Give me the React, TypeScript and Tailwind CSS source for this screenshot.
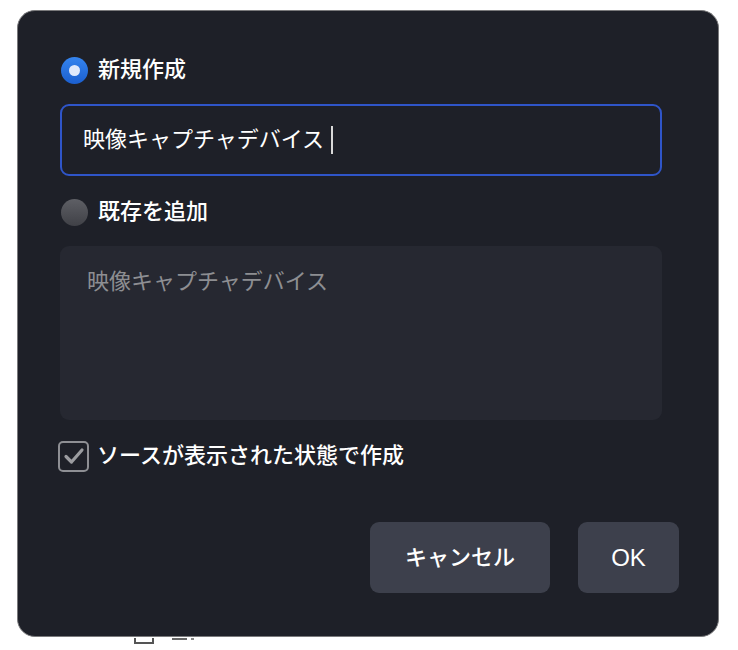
import React, { useState } from "react";

const font = "font-['Liberation_Sans','Noto_Sans_CJK_JP',sans-serif]";

const Radio: React.FC<{ checked: boolean }> = ({ checked }) =>
  checked ? (
    <div className="w-[27px] h-[27px] rounded-full bg-gradient-to-b from-[#3584ee] to-[#1b5fcf] flex items-center justify-center">
      <div className="w-[11px] h-[11px] rounded-full bg-[#dfe9fb]" />
    </div>
  ) : (
    <div className="w-[27px] h-[27px] rounded-full bg-gradient-to-b from-[#5e5f65] to-[#404147]" />
  );

const App: React.FC = () => {
  const [mode, setMode] = useState<"new" | "existing">("new");
  const [visible, setVisible] = useState<boolean>(true);

  return (
    <div className={`min-h-[650px] bg-white overflow-hidden ${font}`}>
      <div className="ml-[17px] mt-[10px] w-[702px] h-[627px] rounded-[18px] border border-[#7a7a7c] bg-[#1e2028] pl-[42px] pr-[39px] pt-[45px] flex flex-col">
        {/* new */}
        <div
          className="h-[28px] flex items-center gap-[10px] cursor-pointer"
          onClick={() => setMode("new")}
        >
          <div className="ml-[1px]">
            <Radio checked={mode === "new"} />
          </div>
          <span className="text-[22px] text-white font-medium leading-none">新規作成</span>
        </div>

        <div className="mt-[20px] w-[602px] h-[72px] rounded-[9px] border-2 border-[#2f55c9] flex items-center pl-[21px]">
          <span className="text-[22px] text-white leading-none">映像キャプチャデバイス</span>
          <span className="ml-[7px] w-[2px] h-[28px] bg-[#d9d9d9]" />
        </div>

        {/* existing */}
        <div
          className="mt-[22px] h-[28px] flex items-center gap-[10px] cursor-pointer"
          onClick={() => setMode("existing")}
        >
          <div className="ml-[1px]">
            <Radio checked={mode === "existing"} />
          </div>
          <span className="text-[22px] text-white font-medium leading-none">既存を追加</span>
        </div>

        <div className="mt-[20px] w-[602px] h-[174px] rounded-[9px] bg-[#262831] pl-[27px] pt-[25px]">
          <span className="text-[22px] text-[#8d8e92] leading-none">映像キャプチャデバイス</span>
        </div>

        {/* visible */}
        <div
          className="mt-[20px] h-[32px] flex items-center gap-[8px] cursor-pointer"
          onClick={() => setVisible(!visible)}
        >
          <div className="-ml-[2px] w-[31px] h-[31px] rounded-[5px] border-2 border-[#8e8f94] flex items-center justify-center">
            {visible && (
              <svg width="22" height="22" viewBox="0 0 22 22">
                <path
                  d="M3 11.5 L8.5 17 L19 5"
                  fill="none"
                  stroke="#9b9ca0"
                  strokeWidth="3.2"
                  strokeLinecap="round"
                  strokeLinejoin="round"
                />
              </svg>
            )}
          </div>
          <span className="text-[22px] text-white font-medium leading-none">
            ソースが表示された状態で作成
          </span>
        </div>

        <div className="mt-[50px] flex justify-end gap-[28px]">
          <button className="w-[180px] h-[71px] rounded-[9px] bg-[#3d404c] text-white text-[22px] font-medium">
            キャンセル
          </button>
          <button className="w-[101px] h-[71px] rounded-[9px] bg-[#3d404c] text-white text-[24px] font-medium">
            OK
          </button>
        </div>
      </div>

      {/* content peeking out below the dialog */}
      <div className="flex items-start h-[13px]">
        <div className="ml-[134px] mt-[1px] w-[20px] h-[6px] border-x-2 border-b-2 border-[#555]" />
        <div className="ml-[18px] mt-[1px] w-[15px] h-[2px] bg-[#666]" />
        <div className="ml-[4px] mt-[1px] w-[3px] h-[2px] bg-[#888]" />
      </div>
    </div>
  );
};

export default App;
